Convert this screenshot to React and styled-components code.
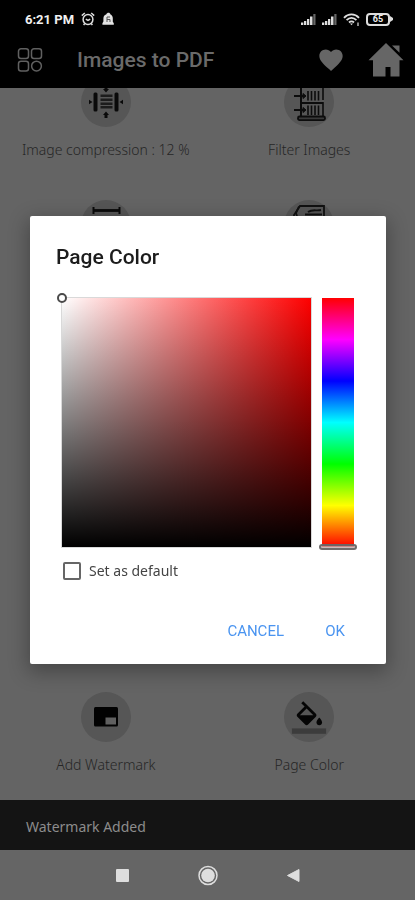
import { useState } from "react";
import styled, { createGlobalStyle } from "styled-components";

const App = () => {
  const [hue, setHue] = useState(0);
  const [isDefault, setIsDefault] = useState(false);

  return (
    <>
      <GlobalStyle />
      <Screen>
        <StatusBar>
          <StatusGroup $gap="7px">
            <Clock>6:21 PM</Clock>
            <AlarmIcon />
            <BellIcon />
          </StatusGroup>
          <StatusGroup $gap="5px">
            <SignalIcon />
            <SignalIcon />
            <WifiIcon />
            <BatteryIcon />
          </StatusGroup>
        </StatusBar>

        <AppBar>
          <IconButton aria-label="Menu">
            <MenuIcon />
          </IconButton>
          <AppTitle>Images to PDF</AppTitle>
          <AppActions>
            <IconButton aria-label="Favourite">
              <HeartIcon />
            </IconButton>
            <IconButton aria-label="Home" $wide>
              <HomeIcon />
            </IconButton>
          </AppActions>
        </AppBar>

        <Content>
          <ToolGrid $scrolled>
            <Tool icon={<CompressIcon />} label="Image compression : 12 %" />
            <Tool icon={<FilterIcon />} label="Filter Images" />
            <Tool icon={<PageSizeIcon />} />
            <Tool icon={<EditPageIcon />} />
          </ToolGrid>
          <ToolGrid>
            <Tool icon={<WatermarkIcon />} label="Add Watermark" />
            <Tool icon={<PaintIcon />} label="Page Color" />
          </ToolGrid>
        </Content>

        <Snackbar role="status">Watermark Added</Snackbar>

        <NavBar>
          <NavButton aria-label="Recent apps">
            <svg width="24" height="24" viewBox="0 0 24 24">
              <rect x="6" y="6" width="13" height="13" rx="1" fill="#dedede" />
            </svg>
          </NavButton>
          <NavButton aria-label="Home screen">
            <svg width="24" height="24" viewBox="0 0 24 24">
              <circle cx="12" cy="12.5" r="9" fill="none" stroke="#dedede" strokeWidth="1.5" />
              <circle cx="12" cy="12.5" r="6.8" fill="#dedede" />
            </svg>
          </NavButton>
          <NavButton aria-label="Back">
            <svg width="24" height="24" viewBox="0 0 24 24">
              <path
                d="M17 6.5v12L5.5 12.5z"
                fill="#dedede"
                stroke="#dedede"
                strokeLinejoin="round"
              />
            </svg>
          </NavButton>
        </NavBar>
      </Screen>

      <Overlay>
        <Dialog role="dialog" aria-labelledby="dialog-title">
          <DialogTitle id="dialog-title">Page Color</DialogTitle>
          <Picker>
            <Shade style={{ "--hue": `hsl(${hue}, 100%, 50%)` }}>
              <ShadeMarker />
            </Shade>
            <HueTrack>
              <HueInput
                type="range"
                min="0"
                max="360"
                value={hue}
                aria-label="Hue"
                onChange={(e) => setHue(Number(e.target.value))}
              />
            </HueTrack>
          </Picker>
          <CheckLabel>
            <Checkbox
              type="checkbox"
              checked={isDefault}
              onChange={(e) => setIsDefault(e.target.checked)}
            />
            Set as default
          </CheckLabel>
          <Actions>
            <ActionButton>CANCEL</ActionButton>
            <ActionButton>OK</ActionButton>
          </Actions>
        </Dialog>
      </Overlay>
    </>
  );
};

const Tool = ({ icon, label }) => (
  <ToolItem>
    <ToolCircle>{icon}</ToolCircle>
    <ToolLabel>{label}</ToolLabel>
  </ToolItem>
);

/* status bar icons */

const AlarmIcon = () => (
  <svg width="14" height="14" viewBox="0 0 14 14" fill="none" stroke="#ddd" strokeWidth="1.5">
    <circle cx="7" cy="7.5" r="4.9" />
    <path d="M.8 3.6 3.8 1M13.2 3.6 10.2 1M2.6 13l1.2-1.5M11.4 13l-1.2-1.5M4.8 7.2l2.2 1.2 2.2-1.2" />
  </svg>
);

const BellIcon = () => (
  <svg width="12" height="14" viewBox="0 0 12 14">
    <path
      d="M6.5.8c1 0 1.600.6 1.800 1.400C10 3 10.800 4.500 10.800 6.200v3.600l1 1.400v1.600H.4v-1.600l1-1.600V6.400c0-2 1-3.600 3-4.200C4.700 1.400 5.500.8 6.500.8z"
      fill="#e2e2e2"
    />
    <path d="M8 5H5v5M5 7.500h3V10" fill="none" stroke="#555" />
  </svg>
);

const SignalIcon = () => (
  <svg width="16" height="12" viewBox="0 0 16 12" fill="#ddd">
    <path d="M0 9.5h2.300V12H0zM3 8h2.300v4H3zM6 6h2.300v6H6zM9 3.500h2.500V12H9z" />
    <path d="M12.300 1h2.200v11h-2.200z" fill="#666" />
  </svg>
);

const WifiIcon = () => (
  <svg width="18" height="13" viewBox="0 0 18 13" fill="none" stroke="#ddd" strokeWidth="1.8">
    <path d="M1 4.800C5.200.2 11.800.2 16 4.800M3.600 7.200c2.800-3 7-3 9.800 0M6 9.500c1.500-1.500 3.500-1.500 5 0" />
    <path d="M7 10.500h3l-1.500 1.800z" fill="#ddd" stroke="none" />
    <path d="M15 9.500V13" stroke="#999" />
  </svg>
);

const BatteryIcon = () => (
  <Battery>
    <BatteryCell>65</BatteryCell>
    <svg width="3" height="6" viewBox="0 0 3 6">
      <path d="M0 0l3 2v2L0 6z" fill="#ddd" />
    </svg>
  </Battery>
);

/* app bar icons */

const MenuIcon = () => (
  <svg width="26" height="26" viewBox="0 0 26 26" fill="none" stroke="#606060" strokeWidth="1.5">
    <rect x="1.5" y="1.8" width="10" height="9.7" rx="2.5" />
    <rect x="14.5" y="1.8" width="10" height="9.7" rx="2.5" />
    <rect x="1.5" y="14.3" width="10" height="9.7" rx="2.5" />
    <circle cx="19.5" cy="19.1" r="4.9" />
  </svg>
);

const HeartIcon = () => (
  <svg width="28" height="28" viewBox="0 0 24 24" fill="#666">
    <path d="M12 21.350l-1.450-1.320C5.400 15.360 2 12.280 2 8.500 2 5.420 4.420 3 7.500 3c1.740 0 3.410.810 4.500 2.090C13.090 3.810 14.760 3 16.500 3 19.580 3 22 5.420 22 8.500c0 3.780-3.400 6.860-8.550 11.540L12 21.350z" />
  </svg>
);

const HomeIcon = () => (
  <svg width="36" height="36" viewBox="0 0 36 36" fill="#666">
    <path d="M18 1 35.5 18.300h-4V34.500h-9V25h-5v9.500H5V18.300H.5z" />
    <path d="M24 3.500h7.500v7.300z" />
  </svg>
);

/* tool icons */

const CompressIcon = () => (
  <svg width="34" height="34" viewBox="0 0 34 34" fill="#0a0a0a">
    <rect x="4.500" y="7.500" width="4" height="19" rx="1.500" />
    <rect x="25.500" y="7.500" width="4" height="19" rx="1.500" />
    <path d="M11.500 10.800h12M11.500 14.800h12M11.500 18.800h12M11.500 22.300h12" stroke="#1c1c1c" strokeWidth="2.400" />
    <path d="M15.500 1h3v3h1.500L17 7.500 14 4h1.500zM15.500 33h3v-3h1.500L17 26.500 14 30h1.500zM3.500 17 0 14.800v4.400zM30.500 17l3.500-2.200v4.400z" />
  </svg>
);

const FilterIcon = () => (
  <svg width="34" height="38" viewBox="0 0 34 38" fill="none" stroke="#0c0c0c" strokeWidth="2">
    <path d="M9 2v31M9 20h22" />
    <path d="M31 2v31" strokeWidth="1.600" strokeDasharray="15 2" />
    <path d="M2 13h10M2 27h10" />
    <path d="M11 10.500l3 2.500-3 2.500zM11 24.500l3 2.500-3 2.500z" strokeWidth="1" fill="#0c0c0c" />
    <path d="M16 8v9.500M19.500 8v9.500M23 8v9.500M26.500 8v9.500M16 22.500V32M19.500 22.500V32M23 22.500V32M26.500 22.500V32" strokeWidth="1.600" />
    <rect x="6" y="33.500" width="27" height="3.600" rx="1.500" fill="#3a3a3a" strokeWidth="1.800" />
  </svg>
);

const PageSizeIcon = () => (
  <svg width="30" height="38" viewBox="0 0 30 38" fill="none" stroke="#0a0a0a" strokeWidth="2.8">
    <path d="M2.500 1v7M28.500 1v7" strokeWidth="2" />
    <path d="M2.500 4.500h26" />
    <path d="M5 13h21v22H5z" />
  </svg>
);

const EditPageIcon = () => (
  <svg width="36" height="40" viewBox="0 0 36 40" fill="none" stroke="#111" strokeWidth="1.8">
    <path d="M9 1h24v37H3V10z" />
    <path d="M8 1.500 5 8l1 3M17 7c4-3 8-1 13-2M14 9.500h17" />
  </svg>
);

const WatermarkIcon = () => (
  <svg width="24" height="20" viewBox="0 0 24 20">
    <rect width="24" height="19.500" rx="1.500" fill="#020202" />
    <rect x="11.500" y="10.500" width="10.500" height="7" fill="#606060" />
  </svg>
);

const PaintIcon = () => (
  <svg width="36" height="36" viewBox="0 0 24 24">
    <path
      transform="translate(1 1.500) scale(.94)"
      fill="#050505"
      d="M16.560 8.940 7.620 0 6.210 1.410l2.380 2.380-5.150 5.150c-.590.590-.590 1.540 0 2.120l5.500 5.500c.290.290.680.440 1.060.440s.770-.150 1.060-.440l5.500-5.500c.590-.580.590-1.530 0-2.120zM5.210 10 10 5.210 14.790 10H5.210zM19 11.500s-2 2.170-2 3.500c0 1.100.900 2 2 2s2-.900 2-2c0-1.330-2-3.500-2-3.500z"
    />
    <rect x=".6" y="19.600" width="22.800" height="3.600" fill="#3c3c3c" />
  </svg>
);

const GlobalStyle = createGlobalStyle`
  * {
    box-sizing: border-box;
  }

  body {
    margin: 0;
    background-color: #646464;
    font-family: "Noto Sans", sans-serif;
  }

  button {
    border: none;
    padding: 0;
    background: transparent;
    font: inherit;
    cursor: pointer;
  }

  svg {
    display: block;
  }
`;

const Screen = styled.div`
  display: flex;
  flex-direction: column;
  height: 100vh;
`;

const StatusBar = styled.header`
  display: flex;
  align-items: center;
  justify-content: space-between;
  height: 38px;
  padding: 0 22px 0 25px;
  background-color: #000;
`;

const StatusGroup = styled.div`
  display: flex;
  align-items: center;
  gap: ${({ $gap }) => $gap};
`;

const Clock = styled.span`
  color: #f0f0f0;
  font-family: Roboto, sans-serif;
  font-size: 13px;
  font-weight: 700;
`;

const Battery = styled.div`
  display: flex;
  align-items: center;
`;

const BatteryCell = styled.div`
  width: 24px;
  height: 13px;
  border: 2px solid #ddd;
  border-radius: 4px;
  color: #eee;
  font-family: Roboto, sans-serif;
  font-size: 9px;
  font-weight: 700;
  line-height: 9px;
  text-align: center;
`;

const AppBar = styled.div`
  display: flex;
  align-items: center;
  gap: 12px;
  height: 50px;
  padding: 0 11px 6px 17px;
  background-color: #000;
`;

const AppTitle = styled.h1`
  flex: 1;
  margin: 0;
  padding-left: 22px;
  color: #6a6a6a;
  font-family: Roboto, sans-serif;
  font-size: 21px;
  font-weight: 500;
  line-height: 28px;
`;

const AppActions = styled.div`
  display: flex;
  gap: 25px;
`;

const IconButton = styled.button`
  display: grid;
  place-items: center;
  width: ${({ $wide }) => ($wide ? "36px" : "26px")};
  height: 36px;
`;

const Content = styled.main`
  flex: 1;
  display: flex;
  flex-direction: column;
  justify-content: space-between;
  min-height: 0;
  padding: 0 4px 25px;
  overflow: hidden;
`;

const ToolGrid = styled.section`
  display: grid;
  grid-template-columns: 1fr 1fr;
  row-gap: 40px;
  margin-top: ${({ $scrolled }) => ($scrolled ? "-11px" : "0")};
`;

const ToolItem = styled.div`
  display: flex;
  flex-direction: column;
  align-items: center;
  gap: 13px;
`;

const ToolCircle = styled.div`
  display: grid;
  place-items: center;
  width: 50px;
  height: 50px;
  border-radius: 50%;
  background-color: #565656;
`;

const ToolLabel = styled.span`
  height: 20px;
  color: #262626;
  font-size: 14px;
  font-weight: 300;
  line-height: 20px;
  white-space: nowrap;
`;

const Snackbar = styled.div`
  display: flex;
  align-items: center;
  height: 50px;
  padding: 2px 26px 0;
  background-color: #141414;
  color: #8c8c8c;
  font-size: 14px;
`;

const NavBar = styled.nav`
  display: flex;
  align-items: center;
  justify-content: center;
  gap: 62px;
  height: 50px;
  background-color: #656565;
`;

const NavButton = styled.button`
  width: 24px;
  height: 24px;
`;

const Overlay = styled.div`
  position: fixed;
  inset: 0;
  display: flex;
  align-items: center;
  padding: 0 29px 20px 30px;
`;

const Dialog = styled.div`
  flex: 1;
  padding: 26px 32px 12px;
  border-radius: 2px;
  background-color: #fff;
  box-shadow: 0 6px 20px 2px rgba(0, 0, 0, 0.3);
`;

const DialogTitle = styled.h2`
  margin: 0 0 26px -6px;
  color: #1c1c1c;
  font-family: Roboto, sans-serif;
  font-size: 21px;
  font-weight: 500;
  line-height: 30px;
`;

const Picker = styled.div`
  display: flex;
  gap: 11px;
`;

const Shade = styled.div`
  position: relative;
  flex: 1;
  aspect-ratio: 1;
  background: linear-gradient(to top, #000, transparent),
    linear-gradient(to right, #fff, var(--hue));
  box-shadow: 0 0 0 1px rgba(0, 0, 0, 0.15);
`;

const ShadeMarker = styled.span`
  position: absolute;
  top: -5px;
  left: -5px;
  width: 10px;
  height: 10px;
  border: 2px solid #4a4a4a;
  border-radius: 50%;
  background-color: #fff;
`;

const HueTrack = styled.div`
  position: relative;
  width: 32px;
  background: linear-gradient(to top, #f00, #ff0, #0f0, #0ff, #00f, #f0f, #f00);
`;

/* runs bottom to top, with the thumb hanging over both sides of the track */
const HueInput = styled.input`
  position: absolute;
  top: -3px;
  left: -3px;
  width: 38px;
  height: calc(100% + 6px);
  margin: 0;
  appearance: none;
  background: transparent;
  writing-mode: vertical-lr;
  direction: rtl;

  &::-webkit-slider-thumb {
    appearance: none;
    width: 38px;
    height: 6px;
    border: 2px solid rgba(90, 90, 90, 0.8);
    border-radius: 3px;
    background-color: rgba(190, 170, 170, 0.8);
  }
`;

const CheckLabel = styled.label`
  display: flex;
  align-items: center;
  gap: 8px;
  margin-top: 14px;
  padding-left: 1px;
  color: #444;
  font-size: 14px;
  line-height: 20px;
`;

const Checkbox = styled.input`
  width: 18px;
  height: 18px;
  margin: 0;
  appearance: none;
  border: 2px solid #666;
  border-radius: 2px;

  &:checked {
    background-color: #4a90f0;
  }
`;

const Actions = styled.div`
  display: flex;
  justify-content: flex-end;
  gap: 24px;
  margin-top: 29px;
`;

const ActionButton = styled.button`
  min-width: 38px;
  height: 42px;
  padding: 0 8px;
  color: #4a94f0;
  font-family: Roboto, sans-serif;
  font-size: 15px;
`;

export default App;
